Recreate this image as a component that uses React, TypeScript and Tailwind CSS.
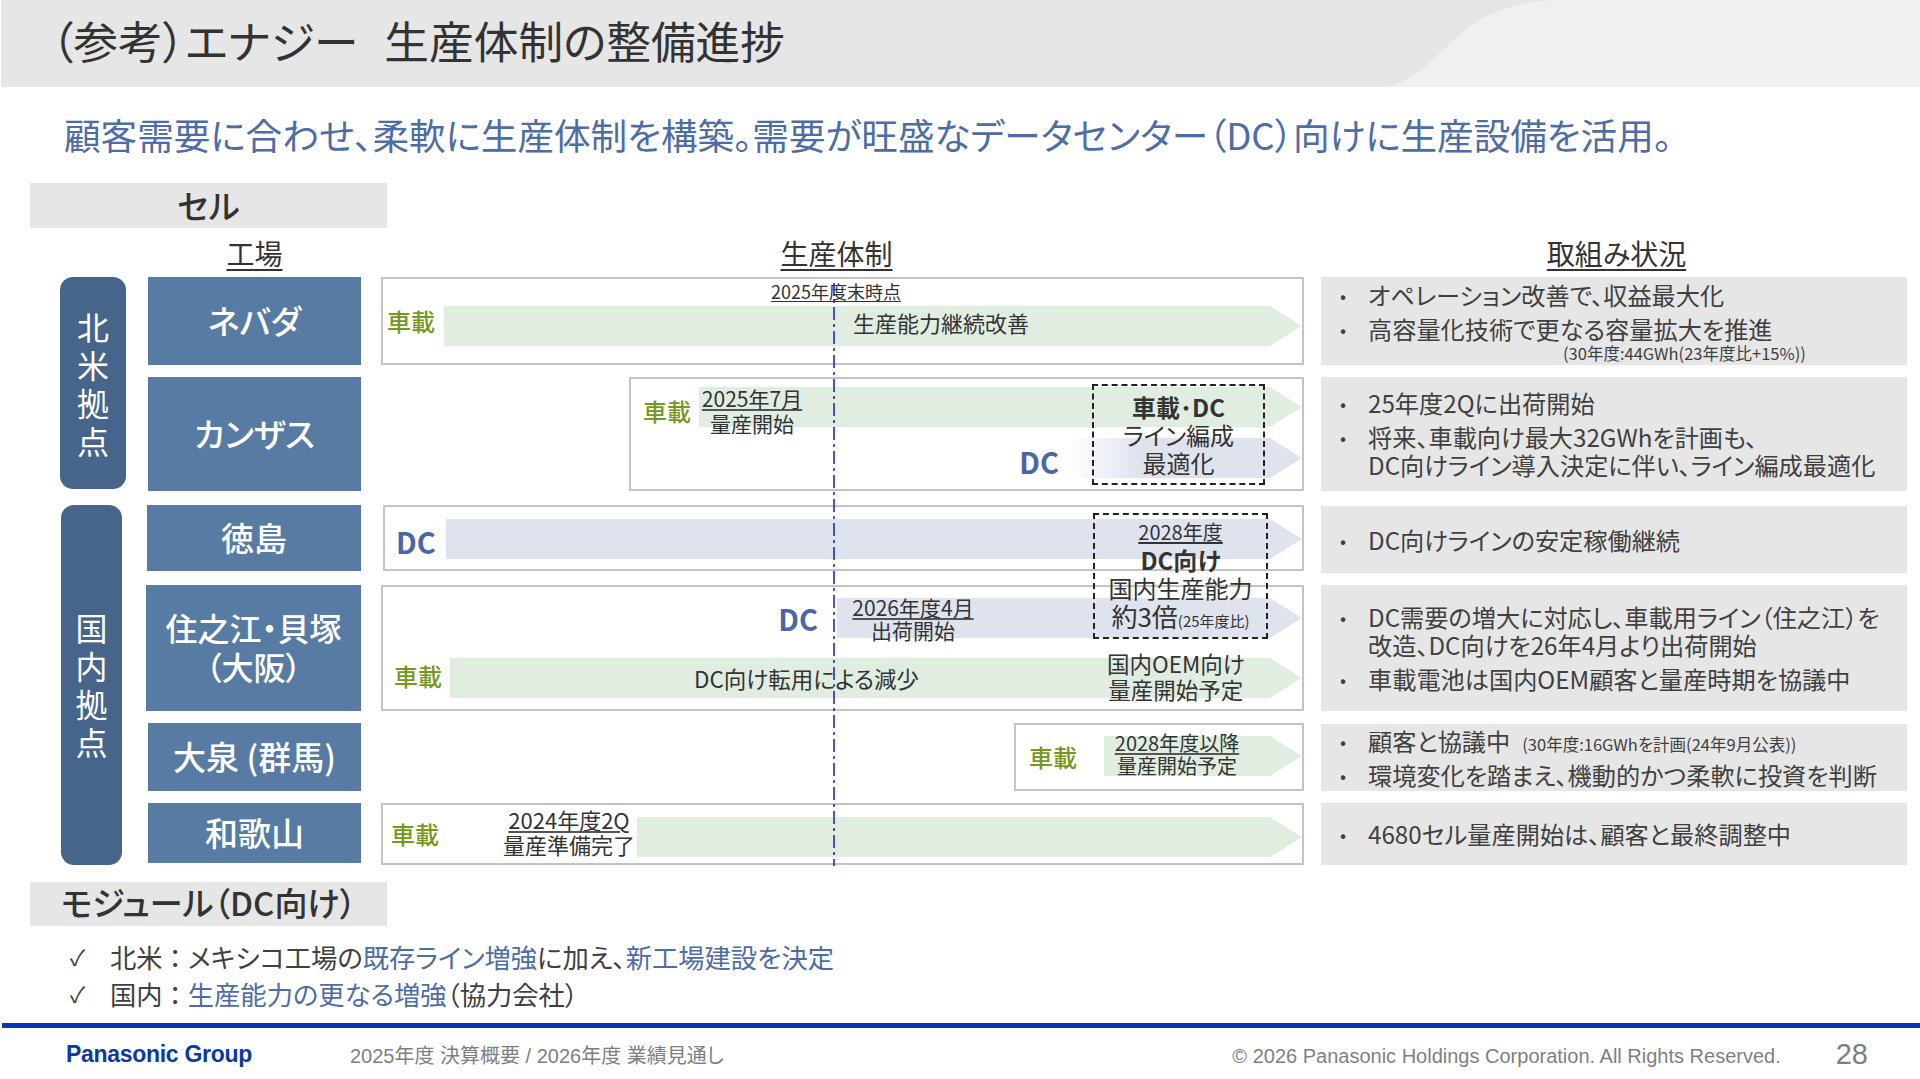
import type { ReactNode } from 'react';

const arrowClass =
  'absolute inset-0 [clip-path:polygon(0_0,calc(100%-32px)_0,100%_50%,calc(100%-32px)_100%,0_100%)]';

function Bar({ kind, className, children }: { kind: 'car' | 'dc' | 'fade'; className: string; children?: ReactNode }) {
  const color =
    kind === 'car'
      ? 'bg-[#e0ede0]'
      : kind === 'dc'
        ? 'bg-[#dee3ee]'
        : 'bg-gradient-to-r from-white to-[#dee3ee] to-[30%]';
  return (
    <div className={`relative h-[40px] ${className}`}>
      <div className={`${arrowClass} ${color}`} />
      {children}
    </div>
  );
}

function Car({ className = '' }: { className?: string }) {
  return <span className={`text-[24px] leading-[30px] font-medium text-[#76981f] ${className}`}>車載</span>;
}

function Dc({ className = '' }: { className?: string }) {
  return <span className={`text-[29px] leading-[30px] font-semibold text-[#4a66a8] ${className}`}>DC</span>;
}

function Note({
  top,
  bottom,
  className = '',
  size = 'text-[21px]',
  leading = 'leading-[25px]',
}: {
  top: string;
  bottom: string;
  className?: string;
  size?: string;
  leading?: string;
}) {
  return (
    <div className={`relative text-center text-[#333333] ${size} ${leading} ${className}`}>
      <div className="underline decoration-[#555555] underline-offset-2">{top}</div>
      <div>{bottom}</div>
    </div>
  );
}

function Factory({ children, className = '' }: { children: ReactNode; className?: string }) {
  return (
    <div className={`mr-[20px] flex flex-col items-center justify-center bg-[#587ba4] pb-[2px] text-[33px] leading-[39px] font-medium text-white ${className}`}>
      {children}
    </div>
  );
}

function Chart({ children, className = '' }: { children: ReactNode; className?: string }) {
  return <div className={`relative mr-[17px] border-2 border-[#c4c4c4] bg-white ${className}`}>{children}</div>;
}

function Status({ children, className = '' }: { children: ReactNode; className?: string }) {
  return (
    <div className={`flex flex-col justify-center bg-[#e6e6e6] pl-[19px] text-[24.2px] leading-[28px] text-[#404040] ${className}`}>
      {children}
    </div>
  );
}

function Item({ children }: { children: ReactNode }) {
  return (
    <div className="flex">
      <span className="w-[28px] shrink-0 text-[18px]">•</span>
      <div>{children}</div>
    </div>
  );
}

export default function App() {
  return (
    <div className="flex h-[1079px] w-[1920px] flex-col overflow-hidden bg-white font-['Noto_Sans_CJK_JP','Liberation_Sans',sans-serif] [font-feature-settings:'palt']">
      {/* Title band */}
      <div className="relative ml-[1px] h-[87px] shrink-0 bg-[#e6e6e6]">
        <svg className="absolute inset-0" width="1920" height="87" viewBox="0 0 1920 87">
          <path d="M1382 87C1412 83 1428 62 1445 47C1475 18 1505 0 1565 0L1920 0L1920 87Z" fill="#f0f0f0" />
        </svg>
        <div className="relative pt-[11px] pl-[50px] text-[44.7px] leading-[58px] text-[#333333]">
          （参考）エナジー<span className="ml-[26px]">生産体制の整備進捗</span>
        </div>
      </div>

      <div className="mt-[23px] mb-[2px] h-[50px] shrink-0 pl-[64px] text-[36.6px] leading-[50px] text-[#4e6ca5]">
        顧客需要に合わせ、柔軟に生産体制を構築。需要が旺盛なデータセンター（DC）向けに生産設備を活用。
      </div>

      <div className="mt-[21px] ml-[30px] flex h-[45px] w-[357px] shrink-0 items-center justify-center bg-[#e6e6e6] text-[33px] font-medium text-[#333333]">
        セル
      </div>

      <div className="relative ml-[60px] w-[1847px] shrink-0">
        {/* Column heads */}
        <div className="mt-[5px] mb-[4px] grid h-[40px] grid-cols-[88px_233px_940px_586px] text-center text-[28px] leading-[40px] text-[#333333] underline underline-offset-4">
          <div />
          <div className="mr-[20px]">工場</div>
          <div className="mr-[29px]">生産体制</div>
          <div className="pl-[5px]">取組み状況</div>
        </div>

        <div className="grid grid-cols-[88px_233px_940px_586px] grid-rows-[88px_116px_68px_126px_68px_62px] gap-y-[12px]">
          {/* 北米 */}
          <div className="col-start-1 row-span-2 row-start-1 mr-[22px] flex h-[212px] items-center justify-center rounded-[13px] bg-[#47658a] pt-[10px] text-[32px] tracking-[6px] text-white [writing-mode:vertical-rl]">
            北米拠点
          </div>
          <Factory className="col-start-2 row-start-1">ネバダ</Factory>
          <Chart className="col-start-3 row-start-1 flex items-start pt-[27px]">
            <Car className="ml-[4px]" />
            <Bar kind="car" className="ml-[9px] flex-1">
              <div className="relative ml-[409px] text-[22px] leading-[32px] text-[#333333]">生産能力継続改善</div>
            </Bar>
            <div className="absolute top-0 left-[388px] text-[18px] leading-[24px] text-[#333333] underline underline-offset-2">
              2025年度末時点
            </div>
          </Chart>
          <Status className="col-start-4 row-start-1 gap-[6px] !justify-start pt-[4px]">
            <Item>オペレーション改善で、収益最大化</Item>
            <Item>高容量化技術で更なる容量拡大を推進</Item>
            <div className="-mt-[5px] ml-[223px] text-[16.5px] leading-[18px]">(30年度:44GWh(23年度比+15%))</div>
          </Status>

          {/* カンザス */}
          <Factory className="col-start-2 row-start-2 h-[114px]">カンザス</Factory>
          <Chart className="col-start-3 row-start-2 ml-[248px] h-[114px] pt-[8px]">
            <div className="flex items-start">
              <Car className="mt-[9px] ml-[12px]" />
              <Bar kind="car" className="ml-[8px] flex-1">
                <Note top="2025年7月" bottom="量産開始" className="-mt-[1px] ml-[2px] w-[102px]" />
              </Bar>
            </div>
            <div className="mt-[11px] flex items-center justify-end">
              <Dc className="mt-[6px] mr-[11px]" />
              <Bar kind="fade" className="w-[232px]" />
            </div>
          </Chart>
          <Status className="col-start-4 row-start-2 h-[114px] gap-[6px]">
            <Item>25年度2Qに出荷開始</Item>
            <Item>
              将来、車載向け最大32GWhを計画も、
              <br />
              DC向けライン導入決定に伴い、ライン編成最適化
            </Item>
          </Status>

          {/* 国内 */}
          <div className="col-start-1 row-span-4 row-start-3 my-[1px] mr-[26px] flex items-center justify-center rounded-[13px] bg-[#47658a] pt-[7px] text-[32px] tracking-[6px] text-white [writing-mode:vertical-rl]">
            国内拠点
          </div>
          <Factory className="col-start-2 row-start-3 -ml-[1px] h-[66px]">徳島</Factory>
          <Chart className="col-start-3 row-start-3 ml-[2px] flex h-[66px] items-start pt-[12px]">
            <Dc className="mt-[7px] ml-[11px]" />
            <Bar kind="dc" className="ml-[10px] flex-1" />
          </Chart>
          <Status className="col-start-4 row-start-3 mt-[1px]">
            <Item>DC向けラインの安定稼働継続</Item>
          </Status>

          <Factory className="col-start-2 row-start-4 -ml-[2px]">
            <div className="text-[32px]">住之江・貝塚</div>
            <div className="text-[32px]">（大阪）</div>
          </Factory>
          <Chart className="col-start-3 row-start-4 pt-[11px]">
            <div className="flex items-center justify-end">
              <Dc className="mr-[19px]" />
              <Bar kind="dc" className="w-[465px]">
                <Note top="2026年度4月" bottom="出荷開始" leading="leading-[23px]" className="-mt-[2px] ml-[6px] w-[140px]" />
              </Bar>
            </div>
            <div className="mt-[20px] flex items-center">
              <Car className="-mt-[4px] ml-[11px]" />
              <Bar kind="car" className="ml-[8px] flex-1">
                <div className="relative ml-[244px] text-[22.5px] leading-[40px] text-[#333333]">DC向け転用による減少</div>
                <div className="absolute -top-[8px] left-[657px] text-center text-[22.5px] leading-[26px] text-[#333333]">
                  <div>国内OEM向け</div>
                  <div>量産開始予定</div>
                </div>
              </Bar>
            </div>
          </Chart>
          <Status className="col-start-4 row-start-4 gap-[6px]">
            <Item>
              DC需要の増大に対応し、車載用ライン（住之江）を
              <br />
              改造、DC向けを26年4月より出荷開始
            </Item>
            <Item>車載電池は国内OEM顧客と量産時期を協議中</Item>
          </Status>

          <Factory className="col-start-2 row-start-5">大泉 (群馬)</Factory>
          <Chart className="col-start-3 row-start-5 ml-[633px] flex items-start pt-[11px]">
            <Car className="mt-[6px] ml-[13px]" />
            <Bar kind="car" className="ml-[27px] flex-1">
              <Note top="2028年度以降" bottom="量産開始予定" size="text-[20px]" leading="leading-[23px]" className="-mt-[5px] ml-[3px] w-[140px]" />
            </Bar>
          </Chart>
          <Status className="col-start-4 row-start-5 mt-[1px] gap-[3px]">
            <Item>
              顧客と協議中<span className="ml-[12px] text-[16.5px]">(30年度:16GWhを計画(24年9月公表))</span>
            </Item>
            <Item>環境変化を踏まえ、機動的かつ柔軟に投資を判断</Item>
          </Status>

          <Factory className="col-start-2 row-start-6 h-[60px]">和歌山</Factory>
          <Chart className="col-start-3 row-start-6 flex items-start pt-[12px]">
            <Car className="mt-[2px] ml-[8px]" />
            <Note top="2024年度2Q" bottom="量産準備完了" size="text-[22px]" className="-mt-[10px] ml-[62px] w-[136px]" />
            <Bar kind="car" className="flex-1" />
          </Chart>
          <Status className="col-start-4 row-start-6">
            <Item>4680セル量産開始は、顧客と最終調整中</Item>
          </Status>
        </div>

        {/* Dashed call-outs that sit over the chart rows */}
        <div className="absolute top-[156px] left-[1032px] flex h-[101px] w-[173px] flex-col items-center justify-center border-2 border-dashed border-[#222222] text-[24px] leading-[28px] text-[#333333]">
          <div className="font-bold">車載･DC</div>
          <div>ライン編成</div>
          <div>最適化</div>
        </div>
        <div className="absolute top-[285px] left-[1033px] flex h-[126px] w-[175px] flex-col items-center justify-center border-2 border-dashed border-[#222222] text-[24px] leading-[28px] text-[#333333]">
          <div className="text-[20px] underline underline-offset-2">2028年度</div>
          <div className="font-bold">DC向け</div>
          <div>国内生産能力</div>
          <div className="text-[26px]">
            約3倍<span className="text-[15px]">(25年度比)</span>
          </div>
        </div>
        <svg className="absolute top-[55px] left-[773px]" width="2" height="583">
          <line x1="1" y1="0" x2="1" y2="583" stroke="#1f2fb5" strokeWidth="1.6" strokeDasharray="13 4 3 4" />
        </svg>
      </div>

      <div className="mt-[17px] ml-[30px] flex h-[44px] w-[357px] shrink-0 items-center justify-center bg-[#e6e6e6] pb-[3px] text-[33px] font-medium text-[#333333]">
        モジュール（DC向け）
      </div>

      <div className="mt-[12px] pl-[70px] text-[26.3px] leading-[37px] text-[#404040]">
        <div className="flex">
          <span className="w-[40px] text-[22px]">✓</span>
          <span>
            北米<span className="mx-[6px]">：</span>メキシコ工場の<span className="text-[#4e6ca5]">既存ライン増強</span>に加え、
            <span className="text-[#4e6ca5]">新工場建設を決定</span>
          </span>
        </div>
        <div className="flex">
          <span className="w-[40px] text-[22px]">✓</span>
          <span>
            国内<span className="mx-[6px]">：</span>
            <span className="text-[#4e6ca5]">生産能力の更なる増強</span>（協力会社）
          </span>
        </div>
      </div>

      {/* Footer */}
      <div className="mt-auto ml-[2px] h-[56px] shrink-0 border-t-[5px] border-[#0a35be]">
        <div className="flex h-full items-center pt-[5px] pl-[64px] font-['Liberation_Sans','Noto_Sans_CJK_JP',sans-serif] text-[20px] text-[#7f7f7f]">
          <span className="-mt-[3px] w-[284px] text-[23px] font-bold tracking-[-0.3px] text-[#0b3a9e]">Panasonic Group</span>
          <span>2025年度 決算概要 / 2026年度 業績見通し</span>
          <span className="ml-auto">© 2026 Panasonic Holdings Corporation. All Rights Reserved.</span>
          <span className="-mt-[4px] mr-[52px] ml-[55px] text-[29px] leading-[36px]">28</span>
        </div>
      </div>
    </div>
  );
}
